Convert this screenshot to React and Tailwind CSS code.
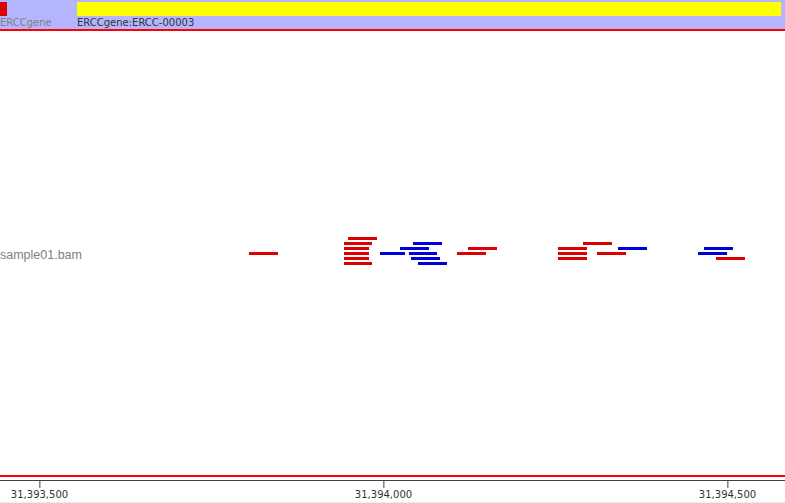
const reads = [
  // [x, y, width, color]
  [249, 252, 29, "r"],
  [348, 237, 29, "r"],
  [344, 242, 28, "r"],
  [344, 247, 25, "r"],
  [344, 252, 25, "r"],
  [344, 257, 25, "r"],
  [344, 262, 28, "r"],
  [413, 242, 29, "b"],
  [400, 247, 29, "b"],
  [380, 252, 25, "b"],
  [409, 252, 28, "b"],
  [411, 257, 29, "b"],
  [418, 262, 29, "b"],
  [468, 247, 29, "r"],
  [457, 252, 29, "r"],
  [583, 242, 29, "r"],
  [558, 247, 29, "r"],
  [618, 247, 29, "b"],
  [558, 252, 29, "r"],
  [597, 252, 29, "r"],
  [558, 257, 29, "r"],
  [704, 247, 29, "b"],
  [698, 252, 29, "b"],
  [716, 257, 29, "r"],
];

const ticks = [
  { x: 39, label: "31,393,500" },
  { x: 383, label: "31,394,000" },
  { x: 727, label: "31,394,500" },
];

export default function App() {
  return (
    <div className="w-[785px] h-[503px] bg-white flex flex-col overflow-hidden font-['DejaVu_Sans',sans-serif]">
      {/* Gene track */}
      <div className="h-[29px] bg-[#b4b4ff] shrink-0 grid grid-cols-[77px_1fr] grid-rows-[14px_13px] pt-[2px]">
        <div className="w-[7px] bg-[#e00000]" />
        <div className="w-[704px] bg-[#ffff00]" />
        <span className="text-[10px] leading-[13px] text-[#808080]">ERCCgene</span>
        <span className="text-[10px] leading-[13px] text-[#333]">ERCCgene:ERCC-00003</span>
      </div>
      <div className="h-[2px] bg-[#ff0000] shrink-0" />

      {/* Alignment track */}
      <div className="relative flex-1 flex items-center">
        <span className="mt-[4px] text-[12.5px] leading-[15px] text-[#808080] font-['Liberation_Sans',sans-serif]">
          sample01.bam
        </span>
        {reads.map(([x, y, w, c], i) => (
          <div
            key={i}
            className={`absolute h-[3px] ${c === "r" ? "bg-[#dd0000]" : "bg-[#0000dd]"}`}
            style={{ left: x, top: y - 31, width: w }}
          />
        ))}
      </div>

      {/* Ruler */}
      <div className="h-[2px] bg-[#ff0000] shrink-0" />
      <div className="h-[26px] relative shrink-0 border-b border-[#eeeeee] pt-[3px]">
        <div className="h-px bg-[#404040]" />
        {ticks.map((t) => (
          <div key={t.x} className="absolute top-[3px] flex flex-col items-center -translate-x-1/2" style={{ left: t.x + 0.5 }}>
            <div className="w-px h-[8px] bg-[#404040]" />
            <span className="text-[10px] leading-[13px] text-[#333] whitespace-nowrap">{t.label}</span>
          </div>
        ))}
      </div>
    </div>
  );
}
